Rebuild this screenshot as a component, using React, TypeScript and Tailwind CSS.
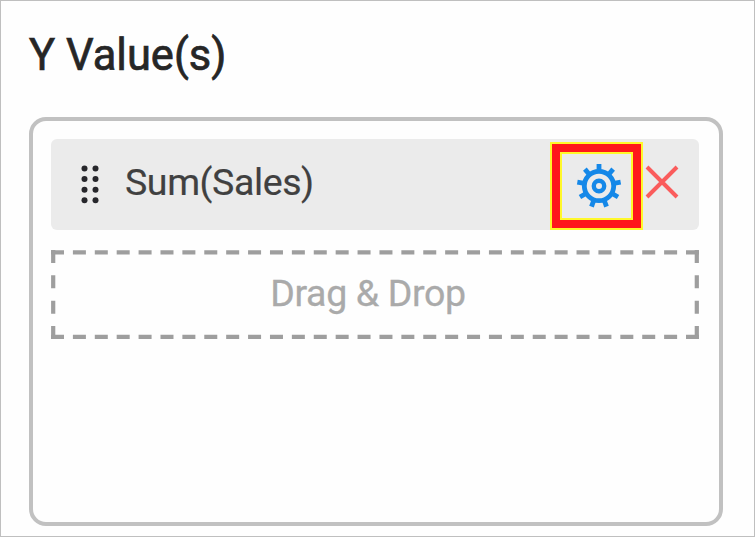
const TEETH = [0, 40, 80, 120, 160, 200, 240, 280, 320];
const DOT_ROWS = [3.5, 14.1, 24.7, 35.3];

function DragHandle() {
  return (
    <svg className="h-[39px] w-[20px] shrink-0" viewBox="0 0 20 39" fill="#26262b">
      {DOT_ROWS.map((y) => (
        <g key={y}>
          <circle cx="4.5" cy={y} r="3" />
          <circle cx="15.5" cy={y} r="3" />
        </g>
      ))}
    </svg>
  );
}

function GearIcon() {
  return (
    <svg className="h-[46px] w-[46px] shrink-0" viewBox="-23 -23 46 46" fill="none" stroke="#1588e8">
      <circle r="14.7" strokeWidth="4.8" />
      <circle r="5.2" strokeWidth="4.4" />
      {TEETH.map((a) => (
        <path key={a} d="M0 -15V-22" strokeWidth="4.8" transform={`rotate(${a})`} />
      ))}
    </svg>
  );
}

function CloseIcon() {
  return (
    <svg className="h-[34px] w-[34px]" viewBox="0 0 34 34" fill="none" stroke="#fa5c5c" strokeWidth="4">
      <path d="M2 2L32 32M32 2L2 32" />
    </svg>
  );
}

function DashedOutline() {
  return (
    <svg className="absolute inset-0 h-full w-full" viewBox="0 0 648 89" fill="none" stroke="#9e9e9e" strokeWidth="4.2">
      <path d="M0 2.4H648M0 86.8H648" strokeDasharray="13 8.897" />
      <path d="M2.2 0V89M645.8 0V89" strokeDasharray="13 12.333" />
    </svg>
  );
}

export default function App() {
  return (
    <div className="flex h-[537px] w-[755px] flex-col border border-[#bfbfbf] bg-[#fefefe] pl-[28px] font-[Roboto,sans-serif]">
      <h1 className="mt-[29px] h-[52px] text-[43.5px] leading-[52px] whitespace-nowrap text-[#262626] [-webkit-text-stroke:0.7px_#262626]">
        Y Value(s)
      </h1>
      <div className="mt-[35px] flex h-[409px] w-[694px] flex-col gap-[20px] rounded-[17px] border-4 border-[#c1c1c1] px-[18px] pt-[18px]">
        <div className="flex h-[91px] w-[648px] shrink-0 items-center rounded-[6px] bg-[#ebebeb] pl-[29px]">
          <DragHandle />
          <span className="ml-[25px] w-[425px] shrink-0 pb-[5px] text-[37.5px] leading-[44px] tracking-[-0.4px] text-[#404040] [-webkit-text-stroke:0.2px_#404040]">
            Sum(Sales)
          </span>
          <div className="mt-[3px] h-[88px] w-[93px] shrink-0 border-2 border-[#fff82a] bg-[#ff171b] p-[8px]">
            <div className="flex h-full w-full items-center justify-center border-2 border-[#fff82a] bg-[#ebebeb] pl-[5px]">
              <GearIcon />
            </div>
          </div>
          <div className="ml-[2px] shrink-0 pb-[5px]">
            <CloseIcon />
          </div>
        </div>
        <div className="relative flex h-[89px] w-[648px] shrink-0 justify-center pr-[14px]">
          <DashedOutline />
          <span className="mt-[21px] text-[37.5px] leading-[44px] tracking-[-0.35px] text-[#aaaaaa] [-webkit-text-stroke:0.3px_#aaaaaa]">
            Drag &amp; Drop
          </span>
        </div>
      </div>
    </div>
  );
}
